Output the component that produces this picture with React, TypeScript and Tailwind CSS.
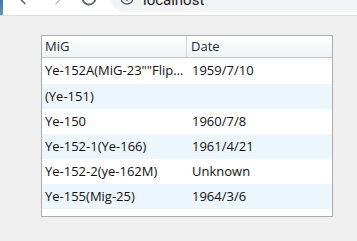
import { ArrowLeft, ArrowRight } from 'lucide-react'

interface Plane {
  name: string
  date: string
}

const planes: Plane[] = [
  { name: 'Ye-152A(MiG-23""Flipper"")', date: '1959/7/10' },
  { name: '(Ye-151)', date: '' },
  { name: 'Ye-150', date: '1960/7/8' },
  { name: 'Ye-152-1(Ye-166)', date: '1961/4/21' },
  { name: 'Ye-152-2(ye-162M)', date: 'Unknown' },
  { name: 'Ye-155(Mig-25)', date: '1964/3/6' }
]

function BrowserBar() {
  return (
    <div className="relative h-[16px] shrink-0 overflow-hidden border-b border-[#dadce0] bg-white">
      <div className="absolute left-0 top-0 h-[16px] w-[3px] bg-gradient-to-b from-[#3c78b4] to-[#5f9aa8]" />
      <ArrowLeft
        size={16}
        strokeWidth={2.2}
        color="#5f6368"
        className="absolute left-[17px] top-[-9px]"
      />
      <ArrowRight
        size={16}
        strokeWidth={2.2}
        color="#c4c6c9"
        className="absolute left-[48px] top-[-9px]"
      />
      <svg
        width="18"
        height="18"
        viewBox="0 0 18 18"
        className="absolute left-[80px] top-[-11px]">
        <path
          d="M15.5 9a6.5 6.5 0 1 1-2-4.7"
          fill="none"
          stroke="#5f6368"
          strokeWidth="1.8"
        />
      </svg>
      <div className="absolute left-[111px] top-[-16px] flex h-[28px] w-[300px] items-center gap-[9px] rounded-full bg-[#f1f3f4] pl-[9px]">
        <svg width="14" height="14" viewBox="0 0 14 14" className="shrink-0">
          <circle cx="7" cy="7" r="6" fill="none" stroke="#5f6368" strokeWidth="1.5" />
          <path d="M7 6v4M7 3.6v1" stroke="#5f6368" strokeWidth="1.5" />
        </svg>
        <span className="mt-[4px] font-['Roboto',sans-serif] text-[15px] text-[#202124]">
          localhost
        </span>
      </div>
    </div>
  )
}

export default function App() {
  return (
    <div className="flex h-[241px] w-[357px] flex-col overflow-hidden bg-[#efefef] font-['Open_Sans',sans-serif] text-[13px]">
      <BrowserBar />
      <div className="ml-[41px] mt-[19px] h-[182px] w-[292px] border border-[#acacac] bg-white">
        <div className="flex h-[22px] border-b border-[#c6c6c6] bg-gradient-to-b from-white to-[#eef3f3] text-[#1c2a3c]">
          <div className="flex w-[145px] shrink-0 items-center border-r border-[#d6d6d6] pl-[3px]">
            MiG
          </div>
          <div className="flex flex-1 items-center pl-[4px]">Date</div>
        </div>
        {planes.map((plane, i) => (
          <div
            key={plane.name}
            className={`flex ${i === 0 ? 'h-[26px]' : 'h-[25px]'} items-center text-[#111] ${i % 2 === 1 ? 'bg-[#eef6fd]' : 'bg-white'}`}>
            <div className="w-[146px] shrink-0 truncate pl-[3px] pr-[2px]">{plane.name}</div>
            <div className="flex-1 pl-[4px]">{plane.date}</div>
          </div>
        ))}
      </div>
    </div>
  )
}
